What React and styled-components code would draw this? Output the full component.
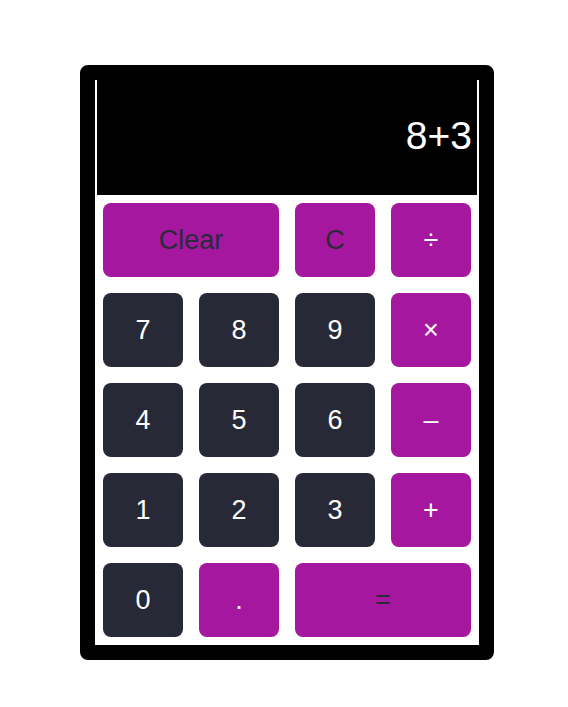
import React from "react";
import styled, { createGlobalStyle } from "styled-components";

const Global = createGlobalStyle`
  html, body { margin: 0; padding: 0; background: #fff; }
  body { font-family: "Liberation Sans", Arial, sans-serif; }
`;

const Page = styled.div`
  padding: 65px 0 0 80px;
`;

const Frame = styled.div`
  width: 384px;
  border: 15px solid #000;
  border-radius: 8px;
  background: #fff;
`;

const Display = styled.div`
  height: 115px;
  margin: 0 2px;
  background: #000;
  color: #fff;
  font-size: 39px;
  display: flex;
  align-items: center;
  justify-content: flex-end;
  padding: 0 5px 3px 0;
  box-sizing: border-box;
`;

const Pad = styled.div`
  display: grid;
  grid-template-columns: repeat(4, 80px);
  grid-auto-rows: 74px;
  gap: 16px;
  padding: 8px;
`;

const Key = styled.button`
  grid-column: span ${(p) => p.$span || 1};
  border: none;
  border-radius: 8px;
  font-family: "Liberation Sans", Arial, sans-serif;
  font-size: 27px;
  cursor: pointer;
  background: ${(p) => (p.$op ? "#a5179f" : "#282936")};
  color: ${(p) => (p.$darkText ? "#2b2a3a" : "#fff")};
  display: flex;
  align-items: center;
  justify-content: center;
  padding: 0;
`;

const keys = [
  { l: "Clear", op: 1, dark: 1, span: 2 },
  { l: "C", op: 1, dark: 1 },
  { l: "÷", op: 1 },
  { l: "7" },
  { l: "8" },
  { l: "9" },
  { l: "×", op: 1 },
  { l: "4" },
  { l: "5" },
  { l: "6" },
  { l: "–", op: 1 },
  { l: "1" },
  { l: "2" },
  { l: "3" },
  { l: "+", op: 1 },
  { l: "0" },
  { l: ".", op: 1 },
  { l: "=", op: 1, dark: 1, span: 2 },
];

export default function App() {
  return (
    <>
      <Global />
      <Page>
        <Frame>
          <Display>8+3</Display>
          <Pad>
            {keys.map((k) => (
              <Key key={k.l} $op={k.op} $darkText={k.dark} $span={k.span}>
                {k.l}
              </Key>
            ))}
          </Pad>
        </Frame>
      </Page>
    </>
  );
}
